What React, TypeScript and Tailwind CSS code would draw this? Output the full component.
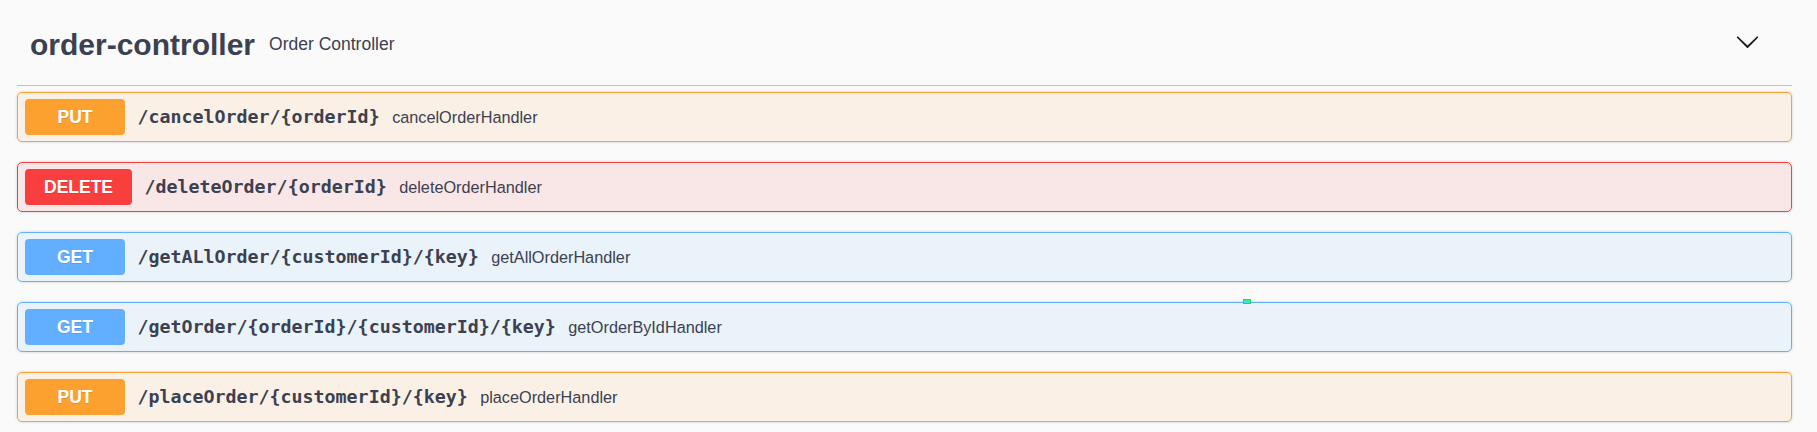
import { ReactNode } from "react";

type Method = "PUT" | "DELETE" | "GET";

const methodStyles: Record<Method, { block: string; badge: string }> = {
  PUT: {
    block: "bg-[#fca130]/10 border-[#fca130]",
    badge: "bg-[#fca130]",
  },
  DELETE: {
    block: "bg-[#f93e3e]/10 border-[#f93e3e]",
    badge: "bg-[#f93e3e]",
  },
  GET: {
    block: "bg-[#61affe]/10 border-[#61affe]",
    badge: "bg-[#61affe]",
  },
};

const operations: { method: Method; path: string; summary: string }[] = [
  { method: "PUT", path: "/cancelOrder/{orderId}", summary: "cancelOrderHandler" },
  { method: "DELETE", path: "/deleteOrder/{orderId}", summary: "deleteOrderHandler" },
  { method: "GET", path: "/getALlOrder/{customerId}/{key}", summary: "getAllOrderHandler" },
  { method: "GET", path: "/getOrder/{orderId}/{customerId}/{key}", summary: "getOrderByIdHandler" },
  { method: "PUT", path: "/placeOrder/{customerId}/{key}", summary: "placeOrderHandler" },
];

const Chevron = () => (
  <svg width="25" height="25" viewBox="0 0 20 20" className="mb-[6px]" aria-hidden="true">
    <path
      fill="#1b1b1b"
      d="M17.418 6.109c.272-.268.709-.268.979 0s.271.701 0 .969l-7.908 7.83c-.27.268-.707.268-.979 0l-7.908-7.83c-.27-.268-.27-.701 0-.969.271-.268.709-.268.979 0L10 13.25l7.418-7.141z"
    />
  </svg>
);

const OpBlock = ({ method, path, summary }: { method: Method; path: string; summary: ReactNode }) => {
  const s = methodStyles[method];
  return (
    <div
      className={`flex items-center h-[50px] px-[7px] border rounded-[5px] shadow-[0_0_3px_rgba(0,0,0,0.19)] ${s.block}`}
    >
      <span
        className={`flex items-center justify-center h-[36px] min-w-[100px] px-[19px] rounded-[4px] text-white font-bold text-[17.5px] [text-shadow:0_1px_0_rgba(0,0,0,0.1)] ${s.badge}`}
      >
        {method}
      </span>
      <span className="px-[12.5px] font-['DejaVu_Sans_Mono',monospace] font-bold text-[18.3px] text-[#3b4151]">
        {path}
      </span>
      <span className="text-[16.25px] text-[#3b4151]">{summary}</span>
    </div>
  );
};

export default function App() {
  return (
    <div className="relative w-[1817px] h-[432px] bg-[#fafafa] font-['Liberation_Sans',Arial,sans-serif] overflow-hidden">
      <div className="ml-[17px] w-[1775px]">
        <div className="flex items-center h-[86px] pt-1 pl-[13px] pr-[32px] border-b border-[#3b4151]/30">
          <h4 className="text-[30px] font-bold text-[#3b4151] leading-tight">order-controller</h4>
          <small className="ml-[14px] text-[17.5px] text-[#3b4151]">Order Controller</small>
          <div className="ml-auto">
            <Chevron />
          </div>
        </div>
        <div className="mt-[6px] flex flex-col gap-[20px]">
          {operations.map((op) => (
            <OpBlock key={op.path} method={op.method} path={op.path} summary={op.summary} />
          ))}
        </div>
      </div>
      {/* little green marker sitting on the getOrder block edge */}
      <div className="absolute left-[1243px] top-[299px] w-[8px] h-[5px] bg-[#3de6c6] border border-[#14e04a]" />
    </div>
  );
}
